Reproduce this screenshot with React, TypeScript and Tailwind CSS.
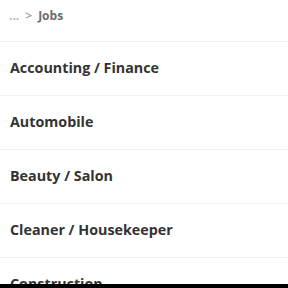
import React from "react";

const categories = [
  "Accounting / Finance",
  "Automobile",
  "Beauty / Salon",
  "Cleaner / Housekeeper",
  "Construction",
];

export default function App() {
  return (
    <div className="flex h-[288px] w-[288px] flex-col bg-white" style={{ fontFamily: "'Open Sans', sans-serif" }}>
      <div className="h-[284px] overflow-hidden">
        <div className="flex h-[41px] items-center gap-[6px] px-[9px] pb-[9px] text-[12px] font-bold">
          <span className="text-[#aab3d8]">...</span>
          <span className="font-semibold text-[#9a9a9a]">&gt;</span>
          <span className="text-[#6b6b6b]">Jobs</span>
        </div>
        <ul>
          {categories.map((c) => (
            <li
              key={c}
              className="flex h-[54px] items-center border-t border-[#f1f1f1] px-[10px] pb-[2px] text-[14.3px] font-bold text-[#333333]"
            >
              {c}
            </li>
          ))}
        </ul>
      </div>
      <div className="h-[4px] bg-black" />
    </div>
  );
}
